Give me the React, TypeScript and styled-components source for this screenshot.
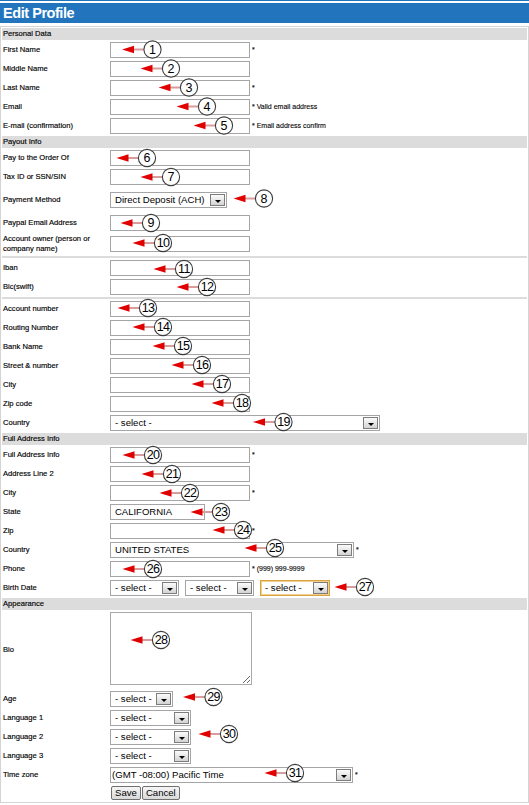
import React from 'react';
import styled, { createGlobalStyle } from 'styled-components';

const GlobalStyle = createGlobalStyle`
  html, body {
    margin: 0;
    padding: 0;
    background: #fff;
  }
  body {
    font-family: "Liberation Sans", Arial, sans-serif;
    color: #000;
  }
  * {
    box-sizing: border-box;
  }
`;

const Page = styled.div`
  position: relative;
  width: 529px;
  height: 805px;
  overflow: hidden;
`;

const TitleBar = styled.div`
  border-top: 1px solid #2275bd;
  padding-top: 2px;
`;

const Title = styled.h1`
  margin: 0;
  height: 20px;
  padding-left: 3px;
  background: #2275bd;
  color: #fff;
  font: bold 14.5px/20px "Liberation Sans", Arial, sans-serif;
  letter-spacing: -0.45px;
`;

const Form = styled.div`
  margin-top: 3px;
  width: 529px;
  border: 1px solid #d4d4d4;
  padding: 1px;
`;

const SectionBar = styled.div<{ $first?: boolean }>`
  height: 12px;
  margin-top: ${(p) => (p.$first ? 0 : 1)}px;
  padding-left: 1px;
  background: #dcdcdc;
  font-size: 7.6px;
  line-height: 12px;
  -webkit-text-stroke: 0.15px #000;
`;

const Separator = styled.div`
  height: 2px;
  margin-top: 1px;
  background: #dcdcdc;
`;

const Row = styled.div<{ $h?: number }>`
  display: flex;
  align-items: center;
  min-height: ${(p) => p.$h ?? 19}px;
`;

const Label = styled.div`
  flex: none;
  width: 108px;
  padding-left: 1px;
  font-size: 7.6px;
  line-height: 9.5px;
  -webkit-text-stroke: 0.15px #000;
`;

const Controls = styled.div<{ $gap?: number }>`
  display: flex;
  align-items: center;
  gap: ${(p) => p.$gap ?? 0}px;
`;

const TextInput = styled.div<{ $w?: number }>`
  width: ${(p) => p.$w ?? 140}px;
  height: 16px;
  padding: 0 4px;
  border: 1px solid #a5a5a5;
  background: #fff;
  font-size: 9.5px;
  line-height: 14px;
  white-space: nowrap;
`;

const TextArea = styled.textarea`
  display: block;
  width: 142px;
  height: 73px;
  margin: 2px 0 4px;
  padding: 2px;
  border: 1px solid #a9a9a9;
  font: 9.5px "Liberation Sans", Arial, sans-serif;
  resize: both;
  outline: none;
`;

const SelectBox = styled.div<{ $w: number; $focused?: boolean; $pad?: number }>`
  display: flex;
  align-items: center;
  justify-content: space-between;
  width: ${(p) => p.$w}px;
  height: 16px;
  padding-left: ${(p) => p.$pad ?? 4}px;
  border: 1px solid ${(p) => (p.$focused ? '#d9a23d' : '#a5a5a5')};
  box-shadow: ${(p) => (p.$focused ? 'inset 0 0 0 1px #f2d08f' : 'none')};
  background: #fff;
  font-size: 9.6px;
  white-space: nowrap;
`;

const DropButton = styled.span`
  position: relative;
  flex: none;
  width: 15px;
  height: 12px;
  margin-right: 1px;
  border: 1px solid #7d7d7d;
  background: linear-gradient(#fbfbfb, #d3d3d3);

  &::after {
    content: '';
    position: absolute;
    left: 3.5px;
    bottom: 2px;
    border-left: 3px solid transparent;
    border-right: 3px solid transparent;
    border-top: 3px solid #000;
  }
`;

const Hint = styled.span`
  margin-left: 2px;
  font-size: 7px;
  white-space: nowrap;
  -webkit-text-stroke: 0.1px #000;
`;

const Button = styled.button`
  height: 14px;
  padding: 0 3px;
  border: 1px solid #707070;
  border-radius: 2px;
  background: linear-gradient(#f6f6f6, #d9d9d9);
  font: 9.6px/12px "Liberation Sans", Arial, sans-serif;
  color: #000;
`;

const ButtonRow = styled.div`
  display: flex;
  gap: 1px;
  height: 17px;
  padding: 2px 0 0 109px;
`;

const Overlay = styled.svg`
  position: absolute;
  inset: 0;
  pointer-events: none;
`;

type SelectProps = { w: number; value: string; focused?: boolean; pad?: number };

const Select = ({ w, value, focused, pad }: SelectProps) => (
  <SelectBox $w={w} $focused={focused} $pad={pad}>
    <span>{value}</span>
    <DropButton />
  </SelectBox>
);

type InputRowProps = {
  label: React.ReactNode;
  hint?: string;
  value?: string;
  w?: number;
  h?: number;
};

const InputRow = ({ label, hint, value, w, h }: InputRowProps) => (
  <Row $h={h}>
    <Label>{label}</Label>
    <Controls>
      <TextInput $w={w}>{value}</TextInput>
      {hint && <Hint>{hint}</Hint>}
    </Controls>
  </Row>
);

// circled callouts drawn over the form: [number, circle x, circle y]
const markers: [number, number, number][] = [
  [1, 152.5, 49.5], [2, 171, 68.5], [3, 189, 87.5], [4, 207, 106.5], [5, 224, 125.5],
  [6, 147, 158], [7, 171, 177], [8, 264, 198.5], [9, 151, 223], [10, 163, 243],
  [11, 184, 269], [12, 207, 287], [13, 148, 308], [14, 163, 327], [15, 183, 346],
  [16, 202, 365], [17, 222, 384], [18, 242, 403], [19, 283.5, 422],
  [20, 153, 455], [21, 172, 474], [22, 190, 493], [23, 221, 512], [24, 243, 530],
  [25, 275, 548], [26, 153, 569], [27, 365, 587],
  [28, 161, 640], [29, 213.5, 697], [30, 229, 734], [31, 295, 773],
];

const Marker = ({ n, cx, cy }: { n: number; cx: number; cy: number }) => {
  const tip = cx - 30.5;
  return (
    <g>
      <line x1={tip + 10} y1={cy} x2={cx - 8} y2={cy} stroke="#d79c9c" strokeWidth={2} />
      <polygon points={`${tip},${cy} ${tip + 12},${cy - 3.8} ${tip + 12},${cy + 3.8}`} fill="#e10000" />
      <circle cx={cx} cy={cy} r={8.6} fill="#fff" stroke="#3c3c3c" strokeWidth={1.1} />
      <text
        x={cx}
        y={cy + 4.3}
        textAnchor="middle"
        fontSize={12.5}
        letterSpacing={n > 9 ? -0.6 : 0}
        fontFamily='"Liberation Sans", Arial, sans-serif'
        fill="#000"
      >
        {n}
      </text>
    </g>
  );
};

export default function App() {
  return (
    <Page>
      <GlobalStyle />
      <TitleBar>
        <Title>Edit Profile</Title>
      </TitleBar>

      <Form>
        <SectionBar $first>Personal Data</SectionBar>
        <InputRow label="First Name" hint="*" />
        <InputRow label="Middle Name" />
        <InputRow label="Last Name" hint="*" />
        <InputRow label="Email" hint="* Valid email address" />
        <InputRow label="E-mail (confirmation)" hint="* Email address confirm" />

        <SectionBar>Payout Info</SectionBar>
        <InputRow label="Pay to the Order Of" />
        <InputRow label="Tax ID or SSN/SIN" />
        <Row $h={27}>
          <Label>Payment Method</Label>
          <Select w={117} value="Direct Deposit (ACH)" />
        </Row>
        <InputRow label="Paypal Email Address" />
        <InputRow
          h={23}
          label={
            <>
              Account owner (person or
              <br />
              company name)
            </>
          }
        />
        <Separator />
        <InputRow label="Iban" />
        <InputRow label="Bic(swift)" />
        <Separator />
        <InputRow label="Account number" />
        <InputRow label="Routing Number" />
        <InputRow label="Bank Name" />
        <InputRow label="Street & number" />
        <InputRow label="City" />
        <InputRow label="Zip code" />
        <Row>
          <Label>Country</Label>
          <Select w={270} value="- select -" />
        </Row>

        <SectionBar>Full Address Info</SectionBar>
        <InputRow label="Full Address Info" hint="*" />
        <InputRow label="Address Line 2" />
        <InputRow label="City" hint="*" />
        <InputRow label="State" value="CALIFORNIA" w={95} />
        <InputRow label="Zip" hint="*" />
        <Row>
          <Label>Country</Label>
          <Controls>
            <Select w={244} value="UNITED STATES" />
            <Hint>*</Hint>
          </Controls>
        </Row>
        <InputRow label="Phone" hint="* (999) 999-9999" />
        <Row>
          <Label>Birth Date</Label>
          <Controls $gap={6}>
            <Select w={69} value="- select -" />
            <Select w={69} value="- select -" />
            <Select w={70} value="- select -" focused />
          </Controls>
        </Row>

        <SectionBar>Appearance</SectionBar>
        <Row>
          <Label>Bio</Label>
          <TextArea defaultValue="" />
        </Row>
        <Row>
          <Label>Age</Label>
          <Select w={63} value="- select -" />
        </Row>
        <Row>
          <Label>Language 1</Label>
          <Select w={81} value="- select -" />
        </Row>
        <Row>
          <Label>Language 2</Label>
          <Select w={81} value="- select -" />
        </Row>
        <Row>
          <Label>Language 3</Label>
          <Select w={81} value="- select -" />
        </Row>
        <Row>
          <Label>Time zone</Label>
          <Controls>
            <Select w={243} value="(GMT -08:00) Pacific Time" pad={1} />
            <Hint>*</Hint>
          </Controls>
        </Row>
        <ButtonRow>
          <Button type="button">Save</Button>
          <Button type="button">Cancel</Button>
        </ButtonRow>
      </Form>

      <Overlay width={529} height={805} viewBox="0 0 529 805">
        {markers.map(([n, cx, cy]) => (
          <Marker key={n} n={n} cx={cx} cy={cy} />
        ))}
      </Overlay>
    </Page>
  );
}
